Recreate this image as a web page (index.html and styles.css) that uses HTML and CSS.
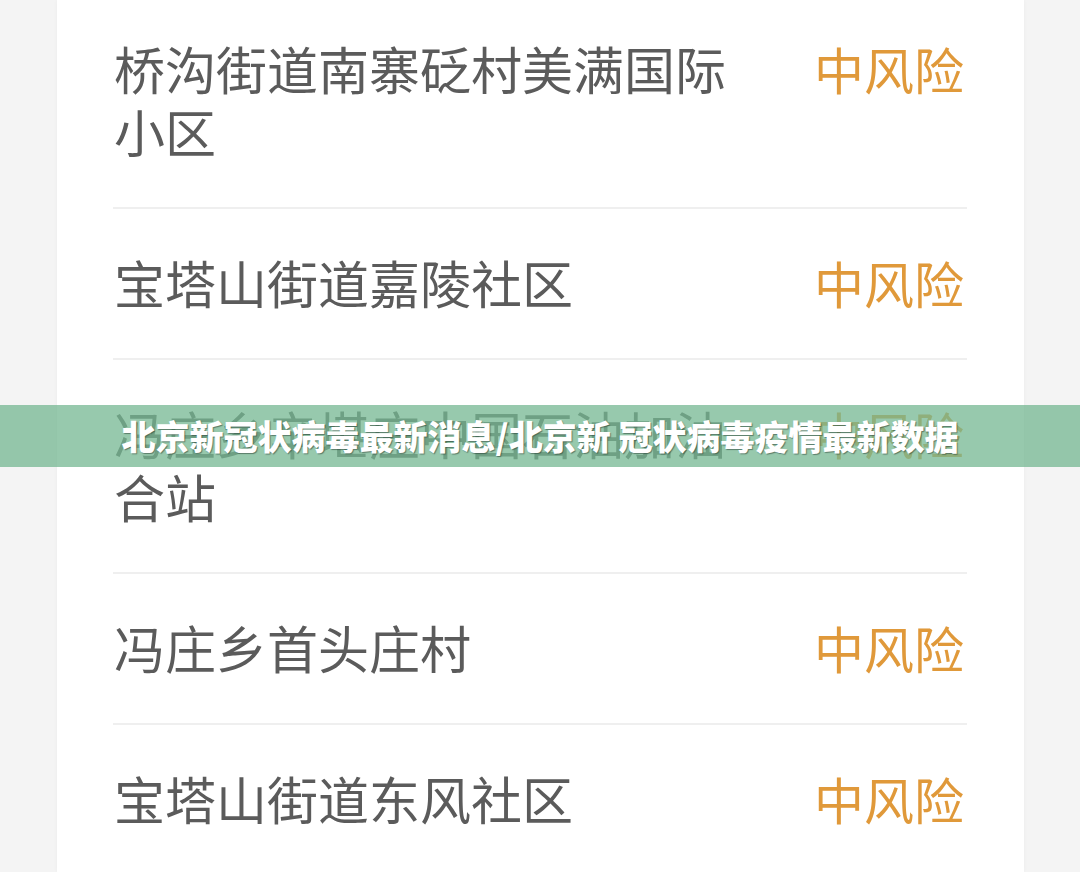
FILE: index.html
```html
<!DOCTYPE html>
<html lang="zh-CN">
<head>
<meta charset="utf-8">
<title>北京新冠状病毒最新消息</title>
<link rel="stylesheet" href="styles.css">
</head>
<body>
<div class="page">
  <div class="card">
    <div class="row first">
      <div class="name">桥沟街道南寨砭村美满国际小区</div>
      <div class="risk">中风险</div>
    </div>
    <div class="row">
      <div class="name">宝塔山街道嘉陵社区</div>
      <div class="risk">中风险</div>
    </div>
    <div class="row">
      <div class="name">冯庄乡辛堪庄中国石油加油合站</div>
      <div class="risk">中风险</div>
    </div>
    <div class="row">
      <div class="name">冯庄乡首头庄村</div>
      <div class="risk">中风险</div>
    </div>
    <div class="row last">
      <div class="name">宝塔山街道东风社区</div>
      <div class="risk">中风险</div>
    </div>
  </div>
  <div class="banner">北京新冠状病毒最新消息/北京新 冠状病毒疫情最新数据</div>
</div>
</body>
</html>
```

FILE: styles.css
```css
html, body {
  margin: 0;
  padding: 0;
}
body {
  background: #f4f4f4;
  font-family: "Noto Sans CJK SC", "Noto Sans", sans-serif;
  width: 1080px;
  height: 872px;
  overflow: hidden;
}
.page {
  position: relative;
  height: 872px;
}
.card {
  margin-left: 57px;
  width: 967px;
  height: 872px;
  background: #ffffff;
  box-shadow: 0 0 4px rgba(0, 0, 0, 0.04);
  padding: 0 57px 0 56px;
  box-sizing: border-box;
}
.row {
  display: flex;
  justify-content: space-between;
  align-items: flex-start;
  padding: 42px 0 44px;
  border-bottom: 2px solid #efefef;
}
.row.first {
  padding-top: 37px;
}
.row.last {
  border-bottom: none;
}
.name {
  width: 640px;
  font-size: 51px;
  line-height: 63px;
  color: #5b5b5b;
  margin-left: 1px;
}
.risk {
  font-size: 50px;
  line-height: 63px;
  color: #e0993a;
  white-space: nowrap;
  margin-right: 3px;
}
.banner {
  position: absolute;
  left: 0;
  right: 0;
  top: 405px;
  height: 62px;
  background: rgba(116, 183, 145, 0.75);
  color: #ffffff;
  font-size: 34px;
  font-weight: 900;
  line-height: 62px;
  text-align: center;
  white-space: nowrap;
  text-shadow: 1px 1px 1px rgba(40, 60, 50, 0.55);
}
```
